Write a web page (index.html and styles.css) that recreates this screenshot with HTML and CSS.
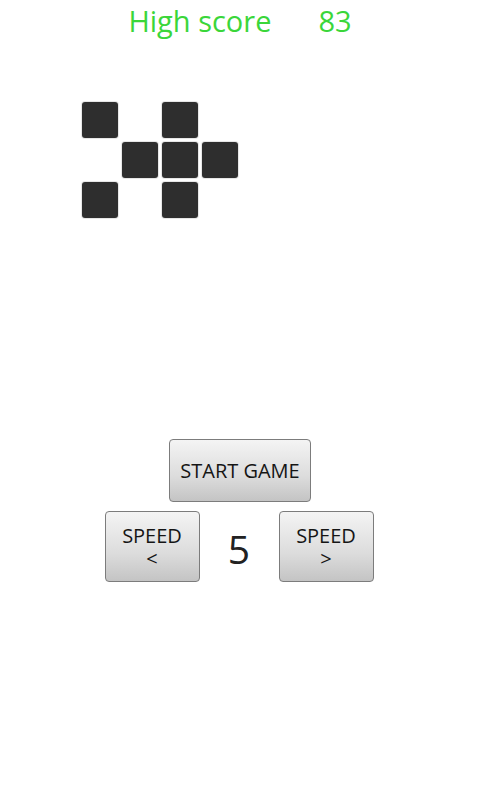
FILE: index.html
```html
<!DOCTYPE html>
<html lang="en">
<head>
    <meta charset="UTF-8">
    <meta name="viewport" content="width=device-width, initial-scale=1.0">
    <title>Brick Game</title>
    <link rel="stylesheet" href="styles.css">
</head>
<body>
    <div class="screen">
        <div class="score-bar">
            <span class="score-label">High score</span>
            <span class="score-value">83</span>
        </div>

        <div class="board">
            <div class="cell"></div>
            <div class="cell empty"></div>
            <div class="cell"></div>
            <div class="cell empty"></div>

            <div class="cell empty"></div>
            <div class="cell"></div>
            <div class="cell"></div>
            <div class="cell"></div>

            <div class="cell"></div>
            <div class="cell empty"></div>
            <div class="cell"></div>
            <div class="cell empty"></div>
        </div>

        <div class="controls">
            <button class="btn start">START GAME</button>
            <div class="speed-row">
                <button class="btn speed"><span class="line">SPEED</span><span class="line">&lt;</span></button>
                <div class="speed-value">5</div>
                <button class="btn speed"><span class="line">SPEED</span><span class="line">&gt;</span></button>
            </div>
        </div>
    </div>
</body>
</html>
```

FILE: styles.css
```css
:root {
    --green: #3ad63a;
    --cell: #2e2e2e;
    --font: 'Open Sans', 'Noto Sans', sans-serif;
}

body {
    margin: 0;
    background: #ffffff;
    font-family: var(--font);
}

.screen {
    width: 480px;
    height: 800px;
}

.score-bar {
    display: flex;
    justify-content: center;
    gap: 47px;
    padding-top: 1px;
    color: var(--green);
    font-size: 29px;
    line-height: 40px;
}

.board {
    display: grid;
    grid-template-columns: repeat(4, 36px);
    grid-auto-rows: 36px;
    gap: 4px;
    margin: 61px 0 0 82px;
}

.cell {
    background: var(--cell);
    border-radius: 3px;
    box-shadow: 0 0 0 1px #e6e6e6;
}

.cell.empty {
    background: none;
    box-shadow: none;
}

.controls {
    display: flex;
    flex-direction: column;
    align-items: center;
    margin-top: 221px;
    gap: 9px;
}

.btn {
    font-family: var(--font);
    color: #151515;
    font-size: 20px;
    line-height: 24px;
    background: linear-gradient(#f4f4f4, #dcdcdc 60%, #c4c4c4);
    border: 1px solid #7c7c7c;
    border-radius: 4px;
    padding: 0;
    cursor: pointer;
}

.start {
    width: 142px;
    height: 63px;
}

.speed-row {
    display: flex;
    align-items: center;
    margin-right: 2px;
}

.speed {
    width: 95px;
    height: 71px;
    display: flex;
    flex-direction: column;
    align-items: center;
    justify-content: center;
}

.line {
    display: block;
    line-height: 23px;
}

.speed-value {
    width: 79px;
    padding-top: 4px;
    text-align: center;
    font-size: 39px;
    color: #222;
}
```
